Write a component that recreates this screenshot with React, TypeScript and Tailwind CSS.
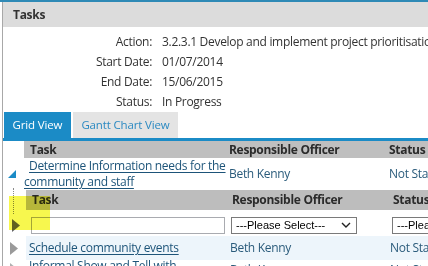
export default function App() {
  const link = "text-[#1d5479] underline decoration-1 underline-offset-[2px]";
  return (
    <div className="relative w-[428px] h-[266px] overflow-hidden bg-white text-[#333] text-[12px] tracking-[-0.3px] font-['Open_Sans',sans-serif]">
      <div className="h-[2px] bg-[#2f8ab6]" />
      <div className="flex">
        <div className="w-[3px] shrink-0 border-r border-[#a8a8a8] h-[264px]" />
        <div className="flex-1 min-w-0 overflow-hidden">
          <div className="h-[25px] bg-[#dcdcdc] flex items-center pl-[10px] font-bold text-[#333]">
            Tasks
          </div>
          <div className="grid grid-cols-[149px_1fr] gap-x-[10px] pt-[5px] leading-[20px] whitespace-nowrap h-[85px]">
            <div className="text-right">Action:</div>
            <div>3.2.3.1 Develop and implement project prioritisation</div>
            <div className="text-right">Start Date:</div>
            <div>01/07/2014</div>
            <div className="text-right">End Date:</div>
            <div>15/06/2015</div>
            <div className="text-right">Status:</div>
            <div>In Progress</div>
          </div>
          <div className="flex gap-[2px] pl-[1px] h-[26px] text-[11.5px] tracking-[-0.15px]">
            <div className="w-[67px] bg-[#1b8bc6] text-white flex items-center justify-center">Grid View</div>
            <div className="w-[105px] bg-[#e4e4e4] text-[#2c8ac2] flex items-center justify-center">Gantt Chart View</div>
          </div>
          <div className="h-[3px] bg-[#1b8bc6]" />
          {/* outer header */}
          <div className="flex h-[17px] whitespace-nowrap">
            <div className="w-[21px] shrink-0" />
            <div className="flex-1 bg-[#bfbfbf] flex items-center font-bold text-[#2b2b2b]">
              <div className="w-[199px] shrink-0 pl-[6px]">Task</div>
              <div className="w-[160px] shrink-0 pl-[6px]">Responsible Officer</div>
              <div className="pl-[6px]">Status</div>
            </div>
          </div>
          {/* row 1 */}
          <div className="flex h-[32px] leading-[16px] whitespace-nowrap">
            <div className="w-[21px] shrink-0 flex items-end pb-[12px] pl-[5px]">
              <svg width="8" height="8" viewBox="0 0 8 8">
                <polygon points="8,0 8,8 0,8" fill="#1b8bc6" />
              </svg>
            </div>
            <div className="w-[199px] shrink-0 indent-[5px]">
              <span className={link}>
                Determine Information needs for the
                <br />
                community and staff
              </span>
            </div>
            <div className="w-[160px] shrink-0 pl-[6px] flex items-center text-[#2a5b7b]">Beth Kenny</div>
            <div className="pl-[6px] flex items-center text-[#2a5b7b]">Not Started</div>
          </div>
          {/* nested grid */}
          <div className="flex">
            <div className="w-[23px] shrink-0 flex flex-col">
              <div className="ml-[10px] -mt-[2px] h-[26px] border-l border-dotted border-[#8a8a8a]" />
            </div>
            <div className="flex-1 min-w-0">
              <div className="h-[20px] bg-[#bdbdbd] flex items-center font-bold text-[#2b2b2b] whitespace-nowrap">
                <div className="w-[200px] shrink-0 pl-[6px]">Task</div>
                <div className="w-[161px] shrink-0 pl-[6px]">Responsible Officer</div>
                <div className="pl-[6px]">Status</div>
              </div>
            </div>
          </div>
          {/* filter row */}
          <div className="flex h-[22px] items-center whitespace-nowrap">
            <div className="w-[23px] shrink-0 pl-[9px] flex items-center">
              <svg width="8" height="13" viewBox="0 0 8 13">
                <polygon points="0,0 8,6.5 0,13" fill="#646464" />
              </svg>
            </div>
            <div className="w-[200px] shrink-0 pl-[5px]">
              <div className="w-[194px] h-[17px] border border-[#a9abb0] bg-white" />
            </div>
            <div className="w-[161px] shrink-0 pl-[5px]">
              <div className="w-[126px] h-[17px] border border-[#7a7a7a] bg-white flex items-center justify-between pl-[4px] pr-[5px] text-[11px] tracking-normal text-black font-['Liberation_Sans',sans-serif]">
                <span>---Please Select---</span>
                <svg width="10" height="6" viewBox="0 0 10 6">
                  <polyline points="1,1 5,5 9,1" fill="none" stroke="#222" strokeWidth="1.4" />
                </svg>
              </div>
            </div>
            <div className="pl-[5px] shrink-0">
              <div className="w-[80px] h-[17px] border border-[#7a7a7a] bg-white flex items-center pl-[4px] text-[11px] tracking-normal text-black font-['Liberation_Sans',sans-serif] overflow-hidden">
                <span>---Please Select---</span>
              </div>
            </div>
          </div>
          {/* row 3 */}
          <div className="flex h-[24px] whitespace-nowrap">
            <div className="w-[23px] shrink-0 pl-[7px] flex items-center">
              <svg width="8" height="13" viewBox="0 0 8 13">
                <polygon points="0,0 8,6.5 0,13" fill="#9a9a9a" />
              </svg>
            </div>
            <div className="flex-1 bg-[#edf5fb] flex items-center">
              <div className="w-[200px] shrink-0 pl-[3px]">
                <span className={link}>Schedule community events</span>
              </div>
              <div className="w-[161px] shrink-0 pl-[4px] text-[#2a5b7b]">Beth Kenny</div>
              <div className="pl-[3px] text-[#2a5b7b]">Not Started</div>
            </div>
          </div>
          {/* row 4 */}
          <div className="flex h-[30px] whitespace-nowrap leading-[16px]">
            <div className="w-[23px] shrink-0 pl-[7px] pt-[3px]">
              <svg width="8" height="13" viewBox="0 0 8 13">
                <polygon points="0,0 8,6.5 0,13" fill="#b0b0b0" />
              </svg>
            </div>
            <div className="flex-1 flex">
              <div className="w-[200px] shrink-0 pl-[3px] -mt-[2px]">
                <span className={link}>
                  Informal Show and Tell with
                  <br />
                  parents
                </span>
              </div>
              <div className="w-[161px] shrink-0 pl-[4px] pt-[2px] text-[#2a5b7b]">Beth Kenny</div>
              <div className="pl-[3px] pt-[2px] text-[#2a5b7b]">Not Started</div>
            </div>
          </div>
        </div>
      </div>
      {/* highlighter annotation */}
      <div className="absolute left-[9px] top-[196px] w-[41px] h-[34px] bg-[#f6f63a] mix-blend-multiply opacity-90" />
    </div>
  );
}
